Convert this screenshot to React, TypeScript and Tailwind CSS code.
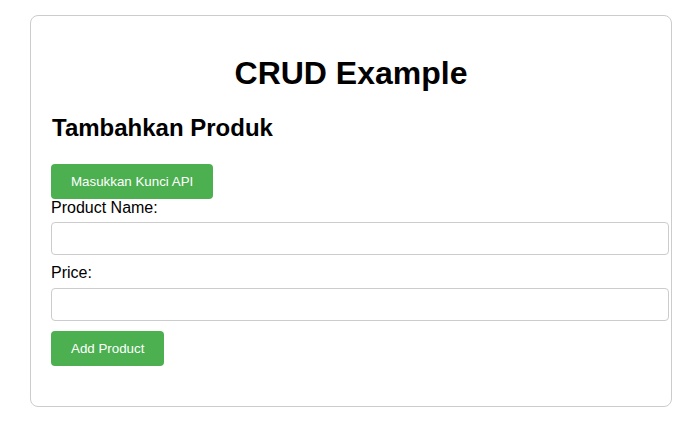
export default function App() {
  return (
    <div className="min-h-screen bg-white pt-[15px] pl-[30px] font-['Liberation_Sans',Arial,sans-serif] text-black">
      <div className="w-[642px] rounded-[8px] border border-[#cccccc] px-5 pt-5 pb-[40px]">
        <h1 className="mt-[19px] text-center text-[32px] font-bold leading-[37px]">CRUD Example</h1>
        <h2 className="mt-[22px] pl-[1px] text-[24px] font-bold leading-[28px]">Tambahkan Produk</h2>
        <button className="mt-[22px] block rounded-[4px] bg-[#4CAF50] px-5 py-[10px] text-[13.33px] font-medium leading-[15px] text-white">
          Masukkan Kunci API
        </button>
        <form onSubmit={(e) => e.preventDefault()}>
          <label className="block text-base leading-[18px]">Product Name:</label>
          <input
            type="text"
            className="mt-[5px] mb-[9px] block h-[33px] w-[618px] rounded-[4px] border border-[#cccccc] px-2 text-[13.33px]"
          />
          <label className="block text-base leading-[18px]">Price:</label>
          <input
            type="number"
            className="mt-[6px] mb-[10px] block h-[33px] w-[618px] rounded-[4px] border border-[#cccccc] px-2 text-[13.33px]"
          />
          <button
            type="submit"
            className="block rounded-[4px] bg-[#4CAF50] px-5 py-[10px] text-[13.33px] font-medium leading-[15px] text-white"
          >
            Add Product
          </button>
        </form>
      </div>
    </div>
  );
}
